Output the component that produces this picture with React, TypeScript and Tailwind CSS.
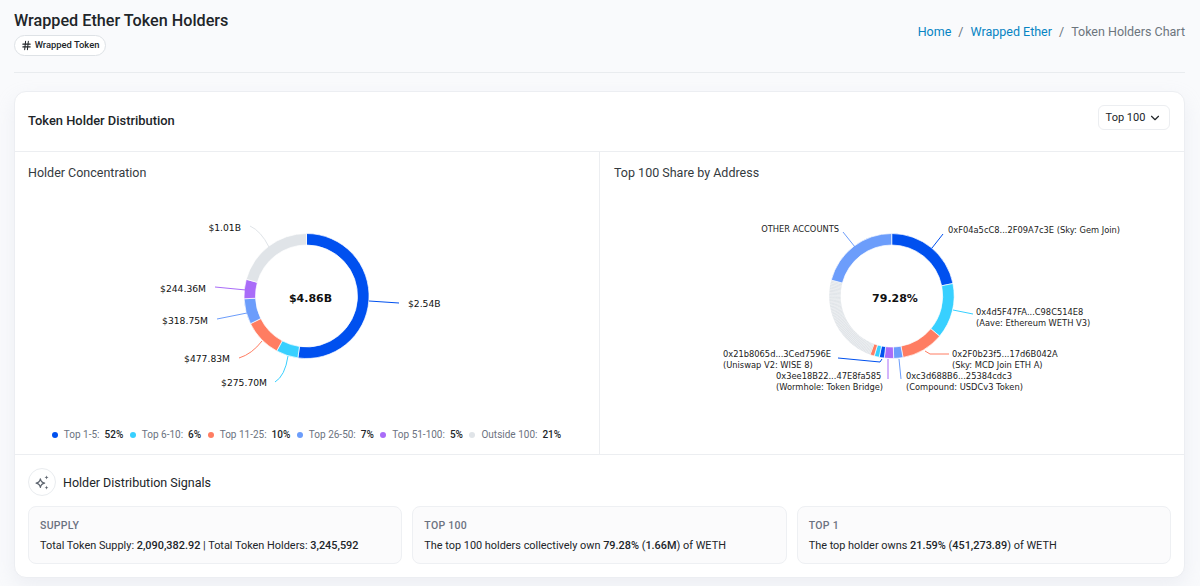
import { ChevronDown, Hash } from "lucide-react";

const CHART_FONT = "font-['DejaVu_Sans',Verdana,sans-serif]";

const BLUE = "#0050ef";
const CYAN = "#38d0ff";
const CORAL = "#ff7d62";
const SKY = "#6c9dfb";
const PURPLE = "#a96cf8";
const GREY = "#e0e4e8";

// start and end are fractions of the ring, clockwise from twelve o'clock
function arc(cx: number, cy: number, r: number, inner: number, start: number, end: number) {
  const point = (rad: number, f: number) => {
    const a = f * 2 * Math.PI;
    return `${(cx + rad * Math.sin(a)).toFixed(2)} ${(cy - rad * Math.cos(a)).toFixed(2)}`;
  };
  const large = end - start > 0.5 ? 1 : 0;
  return `M${point(r, start)} A${r} ${r} 0 ${large} 1 ${point(r, end)} L${point(inner, end)} A${inner} ${inner} 0 ${large} 0 ${point(inner, start)} Z`;
}

function Ring({ cx, cy, slices }: { cx: number; cy: number; slices: { to: number; color: string; w?: number }[] }) {
  let from = 0;
  return (
    <>
      {slices.map((s, i) => {
        const d = arc(cx, cy, 62.5, 51, from, s.to);
        from = s.to;
        return <path key={i} d={d} fill={s.color} stroke="#ffffff" strokeWidth={s.w ?? 0.7} />;
      })}
    </>
  );
}

const leftSlices = [
  { to: 0.522, color: BLUE },
  { to: 0.579, color: CYAN },
  { to: 0.677, color: CORAL },
  { to: 0.743, color: SKY },
  { to: 0.793, color: PURPLE },
  { to: 1, color: GREY },
];

const tail = Array.from({ length: 60 }, (_, i) => ({
  to: 0.556 + ((0.791 - 0.556) * (i + 1)) / 60,
  color: GREY,
  w: 0.1,
}));

const rightSlices = [
  { to: 0.218, color: BLUE },
  { to: 0.361, color: CYAN },
  { to: 0.471, color: CORAL },
  { to: 0.495, color: SKY },
  { to: 0.519, color: PURPLE },
  { to: 0.532, color: BLUE },
  { to: 0.545, color: CYAN },
  { to: 0.556, color: CORAL },
  ...tail,
  { to: 1, color: SKY },
];

const leftLabels = [
  { d: "M369 300 L399 302", color: BLUE, text: "$2.54B", x: 408, y: 303, anchor: "start" },
  { d: "M288 355 Q285 375 275 381", color: CYAN, text: "$275.70M", x: 267, y: 382, anchor: "end" },
  { d: "M262 340 Q252 353 239 357", color: CORAL, text: "$477.83M", x: 230, y: 358, anchor: "end" },
  { d: "M247 312 L217 318", color: SKY, text: "$318.75M", x: 208, y: 320, anchor: "end" },
  { d: "M246 289 L215 286", color: PURPLE, text: "$244.36M", x: 206, y: 288, anchor: "end" },
  { d: "M269 246 Q261 230 250 225", color: GREY, text: "$1.01B", x: 241, y: 227, anchor: "end" },
];

const rightLines = [
  { d: "M855 246 L843 231", color: SKY },
  { d: "M932 247 L943 233", color: BLUE },
  { d: "M953 309 L973 313", color: CYAN },
  { d: "M925 350 L930 353 L949 353", color: CORAL },
  { d: "M899 358 L901 378", color: SKY },
  { d: "M888 358 L888 378", color: PURPLE },
  { d: "M882 358 L880 361 L838 357", color: BLUE },
];

const rightLabels = [
  { x: 839, y: 228, anchor: "end", lines: ["OTHER ACCOUNTS"] },
  { x: 948, y: 229, anchor: "start", lines: ["0xF04a5cC8...2F09A7c3E (Sky: Gem Join)"] },
  { x: 976, y: 311, anchor: "start", lines: ["0x4d5F47FA...C98C514E8", "(Aave: Ethereum WETH V3)"] },
  { x: 952, y: 353, anchor: "start", lines: ["0x2F0b23f5...17d6B042A", "(Sky: MCD Join ETH A)"] },
  { x: 906, y: 375, anchor: "start", lines: ["0xc3d688B6...25384cdc3", "(Compound: USDCv3 Token)"] },
  { x: 776, y: 375, anchor: "start", lines: ["0x3ee18B22...47E8fa585", "(Wormhole: Token Bridge)"] },
  { x: 723, y: 353, anchor: "start", lines: ["0x21b8065d...3Ced7596E", "(Uniswap V2: WISE 8)"] },
];

const legend = [
  { label: "Top 1-5:", value: "52%", dot: "bg-[#0050ef]" },
  { label: "Top 6-10:", value: "6%", dot: "bg-[#38d0ff]" },
  { label: "Top 11-25:", value: "10%", dot: "bg-[#ff7d62]" },
  { label: "Top 26-50:", value: "7%", dot: "bg-[#6c9dfb]" },
  { label: "Top 51-100:", value: "5%", dot: "bg-[#a96cf8]" },
  { label: "Outside 100:", value: "21%", dot: "bg-[#e0e4e8]" },
];

function SignalCard({ title, children }: { title: string; children: React.ReactNode }) {
  return (
    <div className="h-[58px] rounded-lg border border-[#eef0f3] bg-[#fbfbfc] px-[11px] pt-[12px]">
      <p className="text-[10.5px] leading-[13px] font-medium tracking-[0.3px] text-[#6b7280]">{title}</p>
      <p className="mt-[7px] text-[10.9px] leading-[14px] text-[#212529]">{children}</p>
    </div>
  );
}

export default function App() {
  return (
    <div className="h-[586px] overflow-hidden bg-[#f9fafc] px-[14px] pr-[15px] pt-[12px] font-['Roboto',sans-serif] text-[#212529]">
      <div className="flex h-[61px] justify-between border-b border-[#e9ecef]">
        <div>
          <h1 className="text-[16.2px] leading-[18px] font-medium">Wrapped Ether Token Holders</h1>
          <span className="mt-[5px] flex h-[21px] w-[92px] items-center justify-center gap-[3px] rounded-full border border-[#dee2e6] bg-white text-[9.4px] font-medium">
            <Hash size={11} strokeWidth={2.2} />
            Wrapped Token
          </span>
        </div>
        <div className="flex h-[18px] items-center gap-[7px] pt-[20px] text-[12.5px] leading-[18px]">
          <span className="text-[#0784c3]">Home</span>
          <span className="text-[#6c757d]">/</span>
          <span className="text-[#0784c3]">Wrapped Ether</span>
          <span className="text-[#6c757d]">/</span>
          <span className="text-[#6c757d]">Token Holders Chart</span>
        </div>
      </div>

      <div className="mt-[18px] h-[487px] rounded-xl border border-[#eceef2] bg-white shadow-[0_8px_20px_rgba(189,197,209,0.2)]">
        <div className="flex h-[60px] items-center justify-between border-b border-[#eceef1] pl-[13px] pr-[14px]">
          <h2 className="mb-[1px] text-[12.9px] font-medium">Token Holder Distribution</h2>
          <button className="mb-[8px] flex h-[25px] w-[72px] items-center justify-center gap-[3px] rounded-md border border-[#eceef1] text-[11px] text-[#212529]">
            <span className="pt-[1px]">Top 100</span>
            <ChevronDown size={14} strokeWidth={2} />
          </button>
        </div>

        <div className="grid h-[303px] grid-cols-[585px_1fr] border-b border-[#eceef1]">
          <div className="border-r border-[#eceef1] pl-[13px] pr-[14px] pt-[13px]">
            <h3 className="text-[12.5px] leading-[16px] text-[#343a40]">Holder Concentration</h3>
            <svg viewBox="28 180 558 230" width={558} height={230} className={`block ${CHART_FONT}`}>
              <Ring cx={306.5} cy={295} slices={leftSlices} />
              {leftLabels.map((l) => (
                <g key={l.text}>
                  <path d={l.d} fill="none" stroke={l.color} strokeWidth={1} />
                  <text x={l.x} y={l.y} textAnchor={l.anchor as "start" | "end"} dominantBaseline="middle" fontSize={9.2} fill="#111">
                    {l.text}
                  </text>
                </g>
              ))}
              <text x={310.5} y={298} textAnchor="middle" dominantBaseline="middle" fontSize={11} fontWeight={700} fill="#111">
                $4.86B
              </text>
            </svg>
            <div className="mt-[17px] flex items-center justify-center gap-[6.5px] text-[10px] leading-[14px]">
              {legend.map((l) => (
                <span key={l.label} className="flex items-center">
                  <span className={`mr-[6px] h-[6px] w-[6px] rounded-full ${l.dot}`} />
                  <span className="text-[#6b7280]">{l.label}</span>
                  <span className="ml-[5px] font-medium text-[#212529]">{l.value}</span>
                </span>
              ))}
            </div>
          </div>

          <div className="px-[14px] pt-[13px]">
            <h3 className="text-[12.5px] leading-[16px] text-[#343a40]">Top 100 Share by Address</h3>
            <svg viewBox="614 180 556 230" width={556} height={230} className={`block ${CHART_FONT}`}>
              <Ring cx={891.7} cy={295} slices={rightSlices} />
              {rightLines.map((l) => (
                <path key={l.d} d={l.d} fill="none" stroke={l.color} strokeWidth={1} />
              ))}
              {rightLabels.map((l) => (
                <text key={l.lines[0]} x={l.x} y={l.y} textAnchor={l.anchor as "start" | "end"} fontSize={8.3} fill="#222">
                  {l.lines.map((line, i) => (
                    <tspan key={line} x={l.x} dy={i === 0 ? 3 : 11.3}>
                      {line}
                    </tspan>
                  ))}
                </text>
              ))}
              <text x={895} y={298} textAnchor="middle" dominantBaseline="middle" fontSize={11} fontWeight={700} fill="#111">
                79.28%
              </text>
            </svg>
          </div>
        </div>

        <div className="px-[13px] pt-[13px]">
          <div className="flex items-center gap-[7px]">
            <span className="flex h-[28px] w-[28px] items-center justify-center rounded-full border border-[#e9ecef]">
              <svg viewBox="0 0 16 16" width={17} height={17} fill="none">
                <path d="M6 4.5 C6.5 7 7.5 8 10 8.5 C7.5 9 6.5 10 6 12.5 C5.5 10 4.5 9 2 8.5 C4.5 8 5.5 7 6 4.5 Z" stroke="#5f6670" strokeWidth={1.2} strokeLinejoin="round" />
                <path d="M11.8 1.2 C12 2.5 12.5 3 13.8 3.2 C12.5 3.4 12 3.9 11.8 5.2 C11.6 3.9 11.1 3.4 9.8 3.2 C11.1 3 11.6 2.5 11.8 1.2 Z" fill="#5f6670" />
                <path d="M11.8 10.8 C12 12.1 12.5 12.6 13.8 12.8 C12.5 13 12 13.5 11.8 14.8 C11.6 13.5 11.1 13 9.8 12.8 C11.1 12.6 11.6 12.1 11.8 10.8 Z" fill="#5f6670" />
              </svg>
            </span>
            <h3 className="pt-[2px] text-[12.5px] text-[#212529]">Holder Distribution Signals</h3>
          </div>
          <div className="mt-[10px] grid grid-cols-3 gap-[10px]">
            <SignalCard title="SUPPLY">
              Total Token Supply: <span className="font-medium">2,090,382.92</span> | Total Token Holders: <span className="font-medium">3,245,592</span>
            </SignalCard>
            <SignalCard title="TOP 100">
              The top 100 holders collectively own <span className="font-medium">79.28%</span> (<span className="font-medium">1.66M</span>) of WETH
            </SignalCard>
            <SignalCard title="TOP 1">
              The top holder owns <span className="font-medium">21.59%</span> (<span className="font-medium">451,273.89</span>) of WETH
            </SignalCard>
          </div>
        </div>
      </div>
    </div>
  );
}
